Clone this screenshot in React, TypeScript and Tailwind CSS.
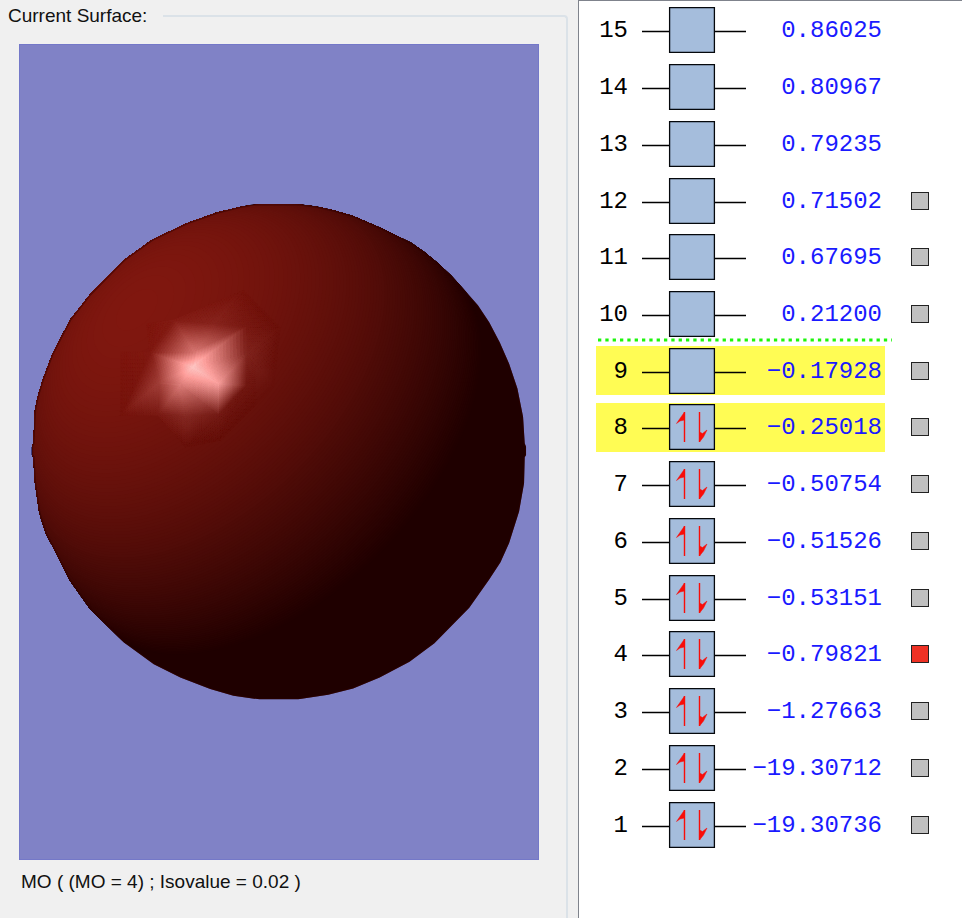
import clsx from "clsx"

type Orbital = {
  level: number
  energy: string
  occupied?: boolean
  highlighted?: boolean
  hasSurface?: boolean
}

const orbitals: Orbital[] = [
  { level: 15, energy: "0.86025" },
  { level: 14, energy: "0.80967" },
  { level: 13, energy: "0.79235" },
  { level: 12, energy: "0.71502", hasSurface: true },
  { level: 11, energy: "0.67695", hasSurface: true },
  { level: 10, energy: "0.21200", hasSurface: true },
  { level: 9, energy: "−0.17928", highlighted: true, hasSurface: true },
  { level: 8, energy: "−0.25018", highlighted: true, occupied: true, hasSurface: true },
  { level: 7, energy: "−0.50754", occupied: true, hasSurface: true },
  { level: 6, energy: "−0.51526", occupied: true, hasSurface: true },
  { level: 5, energy: "−0.53151", occupied: true, hasSurface: true },
  { level: 4, energy: "−0.79821", occupied: true, hasSurface: true },
  { level: 3, energy: "−1.27663", occupied: true, hasSurface: true },
  { level: 2, energy: "−19.30712", occupied: true, hasSurface: true },
  { level: 1, energy: "−19.30736", occupied: true, hasSurface: true },
]

const LUMO = 9
const ACTIVE = 4

// Sphere geometry, in units of a third of a pixel
const CX = 777
const CY = 786
const R = 748
const LIGHT_XY = 0.814
const LIGHT_Z = 0.581
const TILT = Math.asin(LIGHT_XY)
const STEPS = 96

const outline =
  "700,40 840,40 890,47 940,58 1000,75 1080,110 1175,156 1215,184 1250,212 1295,254 1335,297 1376,344 1410,395 1442,456 1470,520 1495,595 1512,680 1517,760 1521,770 1521,795 1517,802 1515,880 1500,965 1470,1060 1444,1118 1410,1170 1350,1255 1245,1362 1170,1418 1080,1465 1000,1498 925,1517 835,1531 718,1531 640,1520 570,1500 480,1465 400,1425 310,1360 205,1255 145,1170 100,1080 74,1030 55,970 42,880 37,800 33,795 33,770 37,760 42,660 50,620 65,570 95,490 148,388 208,312 310,208 395,147 500,97 590,65 660,48"

function shade(diffuse: number, specular = 0) {
  const d = Math.max(0, diffuse)
  const r = Math.min(255, 31 + 97 * d + 180 * specular)
  const g = Math.min(255, 23 * d + 185 * specular)
  const b = Math.min(255, 15 * d + 190 * specular)
  return `rgb(${Math.round(r)},${Math.round(g)},${Math.round(b)})`
}

// u runs towards the light (up and to the left), w across it
function toPoint(u: number, w: number) {
  const x = CX + R * (-u - w) * Math.SQRT1_2
  const y = CY + R * (-u + w) * Math.SQRT1_2
  return `${x.toFixed(1)},${y.toFixed(1)}`
}

// The part of the visible hemisphere that is at least this bright
function litRegion(c: number) {
  const near: string[] = []
  const far: string[] = []
  const maxW = Math.sqrt(1 - c * c)
  for (let i = 0; i <= 48; i++) {
    const w = -maxW * Math.cos((Math.PI * i) / 48)
    const rho = Math.sqrt(Math.max(0, 1 - w * w))
    const spread = rho > 0 ? Math.acos(Math.min(1, c / rho)) : 0
    const lo = Math.min(Math.PI / 2, TILT - spread)
    const hi = Math.min(Math.PI / 2, TILT + spread)
    near.push(toPoint(rho * Math.sin(lo), w))
    far.unshift(toPoint(rho * Math.sin(hi), w))
  }
  return [...near, ...far].join(" ")
}

function diffuseAt(x: number, y: number) {
  const nx = (x - CX) / R
  const ny = (y - CY) / R
  const nz = Math.sqrt(Math.max(0, 1 - nx * nx - ny * ny))
  return -LIGHT_XY * Math.SQRT1_2 * (nx + ny) + LIGHT_Z * nz
}

// x, y and specular strength
type Vertex = [number, number, number]

const peak: Vertex = [517, 530, 0.98]
const right: Vertex = [595, 580, 0.78]
const below: Vertex = [480, 585, 0.58]
const left: Vertex = [415, 578, 0.24]
const above: Vertex = [525, 485, 0.55]
const r1: Vertex = [462, 388, 0.04]
const r2: Vertex = [585, 398, 0.09]
const r3: Vertex = [680, 408, 0.04]
const r4: Vertex = [682, 492, 0.1]
const r5: Vertex = [680, 585, 0.04]
const r6: Vertex = [595, 675, 0.06]
const r7: Vertex = [495, 680, 0.13]
const r8: Vertex = [412, 675, 0.04]
const r9: Vertex = [388, 485, 0.02]

const facets: [Vertex, Vertex, Vertex][] = [
  [above, r1, r2],
  [above, r2, r3],
  [above, peak, r3],
  [peak, r3, r4],
  [peak, r4, right],
  [right, r4, r5],
  [right, r5, r6],
  [peak, right, below],
  [below, right, r6],
  [below, r6, r7],
  [below, r7, r8],
  [below, r8, left],
  [peak, below, left],
  [peak, left, r9],
  [peak, r9, above],
  [above, r9, r1],
  [left, r8, [300, 675, 0]],
  [left, r9, [300, 675, 0]],
  [r8, r7, [495, 770, 0]],
  [r7, r6, [495, 770, 0]],
  [r6, r5, [600, 750, 0]],
  [r6, [600, 750, 0], [495, 770, 0]],
  [r5, [600, 750, 0], [760, 590, 0]],
  [r4, r5, [760, 590, 0]],
  [r4, [760, 590, 0], [780, 410, 0]],
  [r3, r4, [780, 410, 0]],
  [r2, r3, [670, 300, 0]],
  [r1, r2, [670, 300, 0]],
  [r3, [670, 300, 0], [780, 410, 0]],
  [r9, r1, [380, 400, 0]],
  [r9, [300, 485, 0], [300, 675, 0]],
]

// Interpolates the highlight across one facet by splitting it into small triangles
function Facet({ facet }: { facet: [Vertex, Vertex, Vertex] }) {
  const [a, b, c] = facet
  const n = 16
  const at = (i: number, j: number): Vertex => {
    const s = i / n
    const t = j / n
    return [0, 1, 2].map((k) => a[k] + (b[k] - a[k]) * s + (c[k] - a[k]) * t) as Vertex
  }
  const pieces: [Vertex, Vertex, Vertex][] = []
  for (let i = 0; i < n; i++) {
    for (let j = 0; j < n - i; j++) {
      pieces.push([at(i, j), at(i + 1, j), at(i, j + 1)])
      if (j < n - i - 1) pieces.push([at(i + 1, j), at(i + 1, j + 1), at(i, j + 1)])
    }
  }
  return (
    <>
      {pieces.map((p, i) => {
        const [x, y, s] = [0, 1, 2].map((k) => (p[0][k] + p[1][k] + p[2][k]) / 3)
        const color = shade(diffuseAt(x, y), s)
        return (
          <polygon
            key={i}
            points={p.map((v) => `${v[0].toFixed(1)},${v[1].toFixed(1)}`).join(" ")}
            fill={color}
            stroke={color}
            strokeWidth="2"
          />
        )
      })}
    </>
  )
}

function Sphere() {
  return (
    <svg
      viewBox="0 0 520 816"
      className="absolute inset-0 h-full w-full"
      role="img"
      aria-label="Molecular orbital surface"
    >
      <clipPath id="sphere">
        <polygon points={outline} />
      </clipPath>
      <g transform="translate(1 146) scale(0.33333)">
        <polygon points={outline} fill={shade(0)} />
        <g clipPath="url(#sphere)">
          {Array.from({ length: STEPS }).map((_, i) => (
            <polygon key={i} points={litRegion((i + 0.5) / STEPS)} fill={shade((i + 1) / STEPS)} />
          ))}
          {facets.map((facet, i) => (
            <Facet key={i} facet={facet} />
          ))}
          <polygon points={outline} fill="none" stroke="#300000" strokeOpacity="0.5" strokeWidth="7" />
        </g>
      </g>
    </svg>
  )
}

function Slot({ occupied }: { occupied?: boolean }) {
  return (
    <svg width="104" height="46" viewBox="0 0 104 46" className="block">
      <path d="M0 24.5H104" stroke="#000" strokeWidth="1.3" />
      <rect x="27.6" y="0.6" width="44.8" height="44.8" fill="#a5bddc" stroke="#05080c" strokeWidth="1.3" />
      {occupied && (
        <g fill="#f80d08" stroke="#f80d08">
          <path d="M42.5 8V38M57.5 8V38" strokeWidth="1.4" />
          <path d="M42.5 8L39 13L34.5 19.5L38 17L42.5 16Z" strokeWidth="0.5" />
          <path d="M57.5 38V28L60.5 29.5L65 26L61.5 33Z" strokeWidth="0.5" />
        </g>
      )}
    </svg>
  )
}

function OrbitalRow({ orbital }: { orbital: Orbital }) {
  const { level, energy, occupied, highlighted, hasSurface } = orbital
  const cell = clsx("flex h-[49px] items-center", highlighted && "bg-[#fffc54]")
  return (
    <tr>
      <th scope="row" className="relative p-0 font-normal">
        {level === LUMO && (
          <svg width="296" height="4" className="absolute -top-1 left-0 max-w-none">
            <path d="M2 2H296" stroke="#1df50c" strokeWidth="3" strokeDasharray="3.3 4.03" />
          </svg>
        )}
        <div className={clsx(cell, "w-[46px] justify-end pt-[2px] pr-[14px] text-black")}>{level}</div>
      </th>
      <td className="p-0">
        <div className={clsx(cell, "w-[104px]")}>
          <Slot occupied={occupied} />
        </div>
      </td>
      <td className="p-0">
        <div className={clsx(cell, "w-[139px] justify-end pt-[2px] pr-[3px] text-[#1a1aff]")}>{energy}</div>
      </td>
      <td className="p-0 pl-[26px]">
        {hasSurface && (
          <input
            type="checkbox"
            aria-label={`Show surface for orbital ${level}`}
            defaultChecked={level === ACTIVE}
            className="block h-[18px] w-[18px] appearance-none border border-[#222] bg-[#c0c0c0] checked:bg-[#ee3124]"
          />
        )}
      </td>
    </tr>
  )
}

export default function App() {
  return (
    <main className="flex min-h-screen bg-[#f0f0f0] font-['Liberation_Sans',Arial,sans-serif] text-[19px] leading-8 text-[#111]">
      <section className="flex min-w-0 flex-1 flex-col pr-[10px]">
        <fieldset className="flex min-w-0 flex-1 flex-col rounded-tr border-t-2 border-r-2 border-[#dbe2e8] pr-[27px] pl-[19px]">
          <legend className="-ml-[19px] pr-4 pl-2">Current Surface:</legend>
          <div className="relative mt-3 min-h-[400px] flex-1 border border-[#7478c8] bg-[#8082c6]">
            <Sphere />
          </div>
          <p className="pt-[6px] pb-5 pl-[2px]">MO ( (MO = 4) ; Isovalue = 0.02 )</p>
        </fieldset>
      </section>

      <section className="w-[384px] shrink-0 border-t border-l border-[#7f838c] bg-white pt-px pl-[17px]">
        <table className="h-[851px] border-collapse font-['Liberation_Mono','Courier_New',monospace] text-2xl">
          <tbody>
            {orbitals.map((orbital) => (
              <OrbitalRow key={orbital.level} orbital={orbital} />
            ))}
          </tbody>
        </table>
      </section>
    </main>
  )
}
